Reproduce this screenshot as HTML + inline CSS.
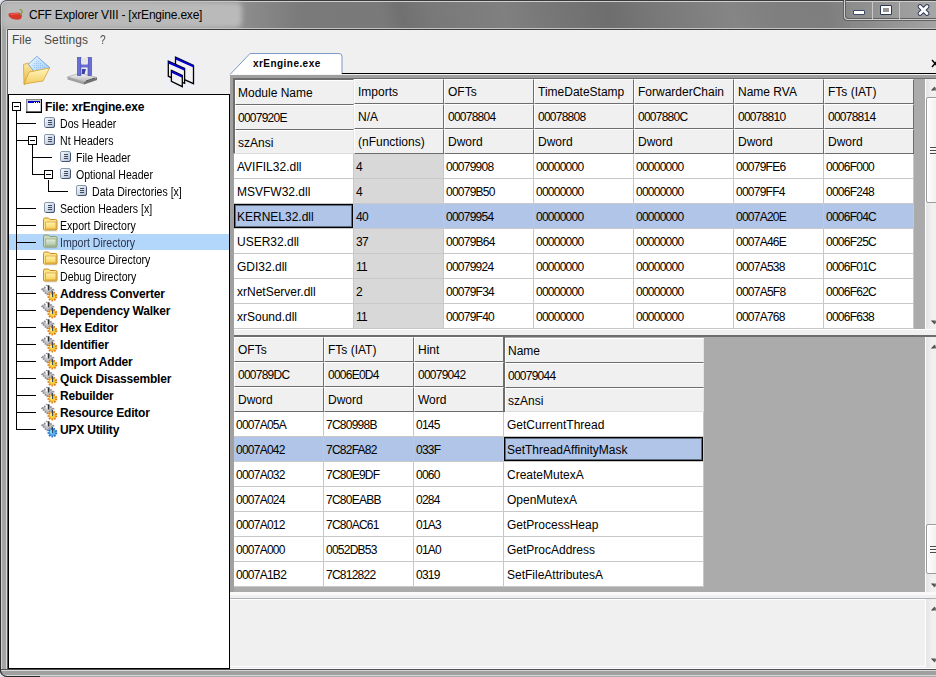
<!DOCTYPE html><html><head><meta charset="utf-8"><style>
html,body{margin:0;padding:0;}body{width:936px;height:677px;overflow:hidden;position:relative;background:#f0f0f0;font-family:"Liberation Sans", sans-serif;}
div{box-sizing:border-box;}
.g{font-size:12px;line-height:14px;color:#000;}
.t{font-size:11px;line-height:13px;color:#000;}
</style></head><body>
<div style="position:absolute;left:0px;top:0px;width:936px;height:677px;background:#dfe6ee;"></div>
<div style="position:absolute;left:0;top:0;width:940px;height:677px;background:#a8a8a8;border-top-left-radius:7px;border-bottom-left-radius:7px;border-left:1px solid #303030;border-top:1px solid #3a3a3a;box-sizing:border-box;"></div>
<div style="position:absolute;left:1px;top:1px;width:936px;height:28px;border-top-left-radius:6px;background:linear-gradient(90deg,#a8a8a8 0px,#a8a8a8 60px,#9a9a9a 200px,#7a7a7a 300px,#777 600px,#7e7e7e 780px,#8a8a8a 860px,#a4a4a4 936px);border-top:1px solid #cfcfcf;border-left:1px solid #cfcfcf;box-sizing:border-box;"></div>
<div style="position:absolute;left:2px;top:2px;width:240px;height:26px;background:#bababa;border-radius:6px;filter:blur(2.5px);"></div>
<div style="position:absolute;left:250px;top:2px;width:600px;height:26px;background:linear-gradient(75deg, rgba(0,0,0,0) 0px, rgba(0,0,0,0) 130px, rgba(0,0,0,0.07) 150px, rgba(0,0,0,0) 180px, rgba(255,255,255,0.06) 250px, rgba(0,0,0,0) 290px, rgba(0,0,0,0.08) 350px, rgba(0,0,0,0) 400px, rgba(255,255,255,0.07) 470px, rgba(0,0,0,0) 520px, rgba(0,0,0,0.05) 560px, rgba(0,0,0,0) 600px);"></div>
<div style="position:absolute;left:1px;top:29px;width:6px;height:641px;background:linear-gradient(90deg,#d0d0d0 0px,#d0d0d0 1px,#a4a4a4 1px,#a4a4a4 5px,#d8d8d8 5px);"></div>
<div style="position:absolute;left:6px;top:28px;width:940px;height:643px;border-top:1px solid #c4c4c4;border-left:1px solid #d8d8d8;border-top-left-radius:2px;box-sizing:border-box;"></div>
<div style="position:absolute;left:7px;top:29px;width:940px;height:641px;border-top:1px solid #3c3c3c;border-left:1px solid #5a5a5a;border-top-left-radius:1px;box-sizing:border-box;"></div>
<div style="position:absolute;left:1px;top:669px;width:935px;height:1px;background:#505050;"></div>
<div style="position:absolute;left:1px;top:670px;width:935px;height:1px;background:#d8d8d8;"></div>
<div style="position:absolute;left:1px;top:671px;width:935px;height:4px;background:#a0a0a0;"></div>
<div style="position:absolute;left:1px;top:675px;width:935px;height:1px;background:#d8d8d8;"></div>
<div style="position:absolute;left:0;top:660px;width:40px;height:17px;border-bottom:1px solid #2a2a2a;border-left:1px solid #303030;border-bottom-left-radius:7px;box-sizing:border-box;"></div>
<div style="position:absolute;left:8px;top:30px;width:928px;height:639px;background:#f0f0f0;"></div>
<svg style="position:absolute;left:0;top:0" width="30" height="28" viewBox="0 0 30 28"><path d="M8.6 14 C9 12.5, 13 13, 17 12.5 C19 12.3, 21 13, 21.8 15 C22.2 17.5, 21 19.5, 18.5 19.6 C15 19.8, 11 19, 9 16.5 C8.5 15.5, 8.5 14.5, 8.6 14Z" fill="#d8382c"/><path d="M10.5 14.3 C13 14, 16 13.8, 19 13.6" stroke="#f08a7a" stroke-width="1" fill="none" opacity="0.7"/><path d="M20 14.8 C21.8 13.8, 23 11.5, 21.5 10.2 C21 9.8, 20.2 9.6, 19.6 9.8" stroke="#8a9a38" stroke-width="1.4" fill="none"/></svg>
<div style="position:absolute;left:29px;top:9px;white-space:pre;font-size:12px;line-height:13px;color:#000;letter-spacing:-0.2px;">CFF Explorer VIII - [xrEngine.exe]</div>
<div style="position:absolute;left:844px;top:0px;width:100px;height:20px;border:1px solid #d0d0d0;border-top:none;border-bottom-left-radius:4px;background:rgba(255,255,255,0.04);box-shadow:inset 1px -1px 0 #606060, -1px 1px 0 #606060;"></div>
<div style="position:absolute;left:872px;top:1px;width:1px;height:18px;background:#c8c8c8;"></div>
<div style="position:absolute;left:899px;top:1px;width:1px;height:18px;background:#c8c8c8;"></div>
<div style="position:absolute;left:853px;top:10px;width:12px;height:5px;background:#fff;border:1px solid #3a4a6a;border-radius:1px;"></div>
<div style="position:absolute;left:880px;top:5px;width:12px;height:10px;background:transparent;border:1px solid #2e3a55;box-shadow:inset 0 0 0 2px #fff;border-radius:1px;"></div>
<svg style="position:absolute;left:917px;top:4px" width="13" height="12" viewBox="0 0 13 12"><path d="M3 2.5 L10 9.5 M10 2.5 L3 9.5" stroke="#2e3a55" stroke-width="4.6" stroke-linecap="round"/><path d="M3 2.5 L10 9.5 M10 2.5 L3 9.5" stroke="#fff" stroke-width="2.8" stroke-linecap="round"/></svg>
<div style="position:absolute;left:12px;top:34px;white-space:pre;font-size:12px;line-height:13px;color:#4a4a4a;">File</div>
<div style="position:absolute;left:44px;top:34px;white-space:pre;font-size:12px;line-height:13px;color:#4a4a4a;letter-spacing:0.1px;">Settings</div>
<div style="position:absolute;left:100px;top:34px;white-space:pre;font-size:12px;line-height:13px;color:#4a4a4a;transform:scaleX(0.85);transform-origin:0 0;">?</div>
<svg style="position:absolute;left:22px;top:55px" width="30" height="31" viewBox="0 0 30 31">
<defs><linearGradient id="fy" x1="0" y1="0" x2="0" y2="1"><stop offset="0" stop-color="#fff6c0"/><stop offset="1" stop-color="#f3cc60"/></linearGradient>
<linearGradient id="fy2" x1="0" y1="0" x2="0" y2="1"><stop offset="0" stop-color="#fbe7a0"/><stop offset="1" stop-color="#e9b84a"/></linearGradient>
<linearGradient id="fb" x1="0" y1="0" x2="1" y2="1"><stop offset="0" stop-color="#f0f8ff"/><stop offset="1" stop-color="#8cc0f2"/></linearGradient>
<pattern id="dots" width="2" height="2" patternUnits="userSpaceOnUse"><rect width="1" height="1" fill="#6aa6e8" opacity="0.5"/></pattern></defs>
<path d="M1.5 9.5 L6 8 L8 9.5 L12 9.5 L10 26 L2 29.5 Z" fill="url(#fy2)" stroke="#d6a232" stroke-width="0.8"/>
<path d="M14.8 1.3 L27.7 12.5 L17 22.7 L6.3 9.3 Z" fill="url(#fb)" stroke="#5a90d0" stroke-width="0.7"/>
<path d="M14.8 4 L24 12.5 L17 19 L10 10 Z" fill="url(#dots)"/>
<path d="M2 29 L7 17 L27.5 13 L21 26 Z" fill="url(#fy)" stroke="#d6a232" stroke-width="0.8"/>
</svg>
<svg style="position:absolute;left:67px;top:56px" width="31" height="29" viewBox="0 0 31 29">
<defs><linearGradient id="dg" x1="0" y1="0" x2="0" y2="1"><stop offset="0" stop-color="#fafafa"/><stop offset="1" stop-color="#b4b4b4"/></linearGradient></defs>
<path d="M0.5 21 L13 17 L30 21.5 L17 26 Z" fill="url(#dg)" stroke="#9a9a9a" stroke-width="0.6"/>
<path d="M0.5 21 L17 26 L17 28.5 L0.5 23.5Z" fill="#a0a0a0"/>
<path d="M17 26 L30 21.5 L30 24 L17 28.5Z" fill="#707070"/>
<path d="M19 25 L28 22" stroke="#5a5a5a" stroke-width="1"/>
<rect x="28" y="22" width="1" height="1" fill="#3c3"/>
<rect x="10.5" y="1.5" width="3.5" height="18" fill="#6a6ed4" stroke="#3b40a0" stroke-width="0.6"/>
<rect x="21" y="1.5" width="3.5" height="18" fill="#6a6ed4" stroke="#3b40a0" stroke-width="0.6"/>
<rect x="14" y="8.5" width="7" height="3" fill="#6a6ed4"/>
<rect x="14" y="2" width="7" height="5.5" fill="#e4e4e4"/>
<path d="M15 13 L19 13 L17.5 18 L15 18Z" fill="#3b40a0"/>
</svg>
<svg style="position:absolute;left:165px;top:56px" width="32" height="32" viewBox="0 0 32 32">
<rect x="0" y="0" width="32" height="32" fill="#eef0f5"/>
<path d="M10.5 1.2 L28.5 9.3 L28.5 27.7 L10.5 19.6 Z" fill="#f2f2f2" stroke="#000" stroke-width="1.3"/>
<path d="M10.5 1.2 L28.5 9.3 L28.5 11.6 L10.5 3.5Z" fill="#0000d0"/>
<path d="M3.3 5.2 L19.6 12.4 L19.6 27.3 L3.3 20.2 Z" fill="#f2f2f2" stroke="#000" stroke-width="1.3"/>
<path d="M3.3 5.2 L19.6 12.4 L19.6 14.7 L3.3 7.5Z" fill="#0000d0"/>
<path d="M6.4 14.4 L17.3 19.5 L17.3 30.7 L6.4 25.3 Z" fill="#f2f2f2" stroke="#000" stroke-width="1.3"/>
<path d="M6.4 14.4 L17.3 19.5 L17.3 21.8 L6.4 16.7Z" fill="#0000d0"/>
</svg>
<div style="position:absolute;left:8px;top:94px;width:222px;height:575px;background:#fff;border:1px solid #000;"></div>
<div style="position:absolute;left:9px;top:234px;width:220px;height:16px;background:#b3d6fb;"></div>
<div style="position:absolute;left:16px;top:111px;width:1px;height:319px;background:#000;"></div>
<div style="position:absolute;left:12px;top:102px;width:9px;height:9px;background:#fff;border:1px solid #000;"></div>
<div style="position:absolute;left:14px;top:106px;width:5px;height:1px;background:#000;"></div>
<svg style="position:absolute;left:26px;top:99px" width="16" height="14" viewBox="0 0 16 14" shape-rendering="crispEdges"><rect x="0" y="0" width="16" height="14" fill="#8a8a8a"/><rect x="1" y="1" width="14" height="12" fill="#c8c8c8"/><rect x="2" y="2" width="12" height="10" fill="#fff"/><rect x="2" y="2" width="12" height="2" fill="#0000c8"/><rect x="7" y="2" width="7" height="2" fill="#000"/><rect x="8" y="3" width="1" height="1" fill="#fff"/><rect x="10" y="3" width="1" height="1" fill="#fff"/><rect x="12" y="3" width="1" height="1" fill="#fff"/><rect x="7" y="2" width="7" height="1" fill="#0000c8"/><rect x="0" y="13" width="16" height="1" fill="#000"/><rect x="15" y="0" width="1" height="14" fill="#000"/><rect x="0" y="12" width="16" height="1" fill="#000" opacity="0.5"/></svg>
<div style="position:absolute;left:45px;top:100px;white-space:pre;font-size:12px;line-height:14px;font-weight:bold;color:#000;letter-spacing:-0.2px;">File: xrEngine.exe</div>
<div style="position:absolute;left:16px;top:123px;width:20px;height:1px;background:#000;"></div>
<svg style="position:absolute;left:44px;top:117px" width="11" height="11" viewBox="0 0 11 11"><defs><linearGradient id="dc123" x1="0" y1="0" x2="1" y2="1"><stop offset="0" stop-color="#fdfeff"/><stop offset="1" stop-color="#aebcd0"/></linearGradient></defs><rect x="0.5" y="0.5" width="10" height="10" rx="1.5" fill="url(#dc123)" stroke="#8797b0"/><path d="M10.5 2 L10.5 9 Q10.5 10.5 9 10.5 L2 10.5" stroke="#445472" fill="none"/><path d="M4 3.5h4M4 5.5h4M4 7.5h4" stroke="#3c4a64" stroke-width="1"/></svg>
<div style="position:absolute;left:60px;top:117px;white-space:pre;font-size:12px;line-height:14px;color:#000;transform:scaleX(0.88);transform-origin:0 0;">Dos Header</div>
<div style="position:absolute;left:16px;top:140px;width:20px;height:1px;background:#000;"></div>
<svg style="position:absolute;left:44px;top:134px" width="11" height="11" viewBox="0 0 11 11"><defs><linearGradient id="dc140" x1="0" y1="0" x2="1" y2="1"><stop offset="0" stop-color="#fdfeff"/><stop offset="1" stop-color="#aebcd0"/></linearGradient></defs><rect x="0.5" y="0.5" width="10" height="10" rx="1.5" fill="url(#dc140)" stroke="#8797b0"/><path d="M10.5 2 L10.5 9 Q10.5 10.5 9 10.5 L2 10.5" stroke="#445472" fill="none"/><path d="M4 3.5h4M4 5.5h4M4 7.5h4" stroke="#3c4a64" stroke-width="1"/></svg>
<div style="position:absolute;left:60px;top:134px;white-space:pre;font-size:12px;line-height:14px;color:#000;transform:scaleX(0.88);transform-origin:0 0;">Nt Headers</div>
<div style="position:absolute;left:32px;top:157px;width:20px;height:1px;background:#000;"></div>
<svg style="position:absolute;left:60px;top:151px" width="11" height="11" viewBox="0 0 11 11"><defs><linearGradient id="dc157" x1="0" y1="0" x2="1" y2="1"><stop offset="0" stop-color="#fdfeff"/><stop offset="1" stop-color="#aebcd0"/></linearGradient></defs><rect x="0.5" y="0.5" width="10" height="10" rx="1.5" fill="url(#dc157)" stroke="#8797b0"/><path d="M10.5 2 L10.5 9 Q10.5 10.5 9 10.5 L2 10.5" stroke="#445472" fill="none"/><path d="M4 3.5h4M4 5.5h4M4 7.5h4" stroke="#3c4a64" stroke-width="1"/></svg>
<div style="position:absolute;left:76px;top:151px;white-space:pre;font-size:12px;line-height:14px;color:#000;transform:scaleX(0.88);transform-origin:0 0;">File Header</div>
<div style="position:absolute;left:32px;top:174px;width:20px;height:1px;background:#000;"></div>
<svg style="position:absolute;left:60px;top:168px" width="11" height="11" viewBox="0 0 11 11"><defs><linearGradient id="dc174" x1="0" y1="0" x2="1" y2="1"><stop offset="0" stop-color="#fdfeff"/><stop offset="1" stop-color="#aebcd0"/></linearGradient></defs><rect x="0.5" y="0.5" width="10" height="10" rx="1.5" fill="url(#dc174)" stroke="#8797b0"/><path d="M10.5 2 L10.5 9 Q10.5 10.5 9 10.5 L2 10.5" stroke="#445472" fill="none"/><path d="M4 3.5h4M4 5.5h4M4 7.5h4" stroke="#3c4a64" stroke-width="1"/></svg>
<div style="position:absolute;left:76px;top:168px;white-space:pre;font-size:12px;line-height:14px;color:#000;transform:scaleX(0.88);transform-origin:0 0;">Optional Header</div>
<div style="position:absolute;left:48px;top:191px;width:20px;height:1px;background:#000;"></div>
<svg style="position:absolute;left:76px;top:185px" width="11" height="11" viewBox="0 0 11 11"><defs><linearGradient id="dc191" x1="0" y1="0" x2="1" y2="1"><stop offset="0" stop-color="#fdfeff"/><stop offset="1" stop-color="#aebcd0"/></linearGradient></defs><rect x="0.5" y="0.5" width="10" height="10" rx="1.5" fill="url(#dc191)" stroke="#8797b0"/><path d="M10.5 2 L10.5 9 Q10.5 10.5 9 10.5 L2 10.5" stroke="#445472" fill="none"/><path d="M4 3.5h4M4 5.5h4M4 7.5h4" stroke="#3c4a64" stroke-width="1"/></svg>
<div style="position:absolute;left:92px;top:185px;white-space:pre;font-size:12px;line-height:14px;color:#000;transform:scaleX(0.88);transform-origin:0 0;">Data Directories [x]</div>
<div style="position:absolute;left:16px;top:208px;width:20px;height:1px;background:#000;"></div>
<svg style="position:absolute;left:44px;top:202px" width="11" height="11" viewBox="0 0 11 11"><defs><linearGradient id="dc208" x1="0" y1="0" x2="1" y2="1"><stop offset="0" stop-color="#fdfeff"/><stop offset="1" stop-color="#aebcd0"/></linearGradient></defs><rect x="0.5" y="0.5" width="10" height="10" rx="1.5" fill="url(#dc208)" stroke="#8797b0"/><path d="M10.5 2 L10.5 9 Q10.5 10.5 9 10.5 L2 10.5" stroke="#445472" fill="none"/><path d="M4 3.5h4M4 5.5h4M4 7.5h4" stroke="#3c4a64" stroke-width="1"/></svg>
<div style="position:absolute;left:60px;top:202px;white-space:pre;font-size:12px;line-height:14px;color:#000;transform:scaleX(0.88);transform-origin:0 0;">Section Headers [x]</div>
<div style="position:absolute;left:16px;top:225px;width:20px;height:1px;background:#000;"></div>
<svg style="position:absolute;left:41px;top:217px" width="18" height="15" viewBox="0 0 18 15"><defs><linearGradient id="ffolder225" x1="0" y1="0" x2="0" y2="1"><stop offset="0" stop-color="#fff4b0"/><stop offset="1" stop-color="#f7cf55"/></linearGradient></defs><path d="M2.5 12 L2.5 2.5 Q2.5 1 4 1 L7.5 1 L9 2.5 L14.5 2.5 Q16 2.5 16 4 L16 12 Q16 13 15 13 L3.5 13 Q2.5 13 2.5 12Z" fill="#fde48c" stroke="#c98b1c" stroke-width="1"/><path d="M4.5 5 L15 5 L15 12 L4.5 12Z" fill="url(#ffolder225)" stroke="#c98b1c" stroke-width="0.6"/><path d="M3.5 14 L16.5 14" stroke="#000" stroke-opacity="0.12"/></svg>
<div style="position:absolute;left:60px;top:219px;white-space:pre;font-size:12px;line-height:14px;color:#000;transform:scaleX(0.88);transform-origin:0 0;">Export Directory</div>
<div style="position:absolute;left:16px;top:242px;width:20px;height:1px;background:#000;"></div>
<svg style="position:absolute;left:41px;top:234px" width="18" height="15" viewBox="0 0 18 15"><defs><linearGradient id="ffolderg242" x1="0" y1="0" x2="0" y2="1"><stop offset="0" stop-color="#e2eedc"/><stop offset="1" stop-color="#a9c2a4"/></linearGradient></defs><path d="M2.5 12 L2.5 2.5 Q2.5 1 4 1 L7.5 1 L9 2.5 L14.5 2.5 Q16 2.5 16 4 L16 12 Q16 13 15 13 L3.5 13 Q2.5 13 2.5 12Z" fill="#c8d8c0" stroke="#8f9a6a" stroke-width="1"/><path d="M4.5 5 L15 5 L15 12 L4.5 12Z" fill="url(#ffolderg242)" stroke="#8f9a6a" stroke-width="0.6"/><path d="M3.5 14 L16.5 14" stroke="#000" stroke-opacity="0.12"/></svg>
<div style="position:absolute;left:60px;top:236px;white-space:pre;font-size:12px;line-height:14px;color:#2a3550;transform:scaleX(0.88);transform-origin:0 0;">Import Directory</div>
<div style="position:absolute;left:16px;top:259px;width:20px;height:1px;background:#000;"></div>
<svg style="position:absolute;left:41px;top:251px" width="18" height="15" viewBox="0 0 18 15"><defs><linearGradient id="ffolder259" x1="0" y1="0" x2="0" y2="1"><stop offset="0" stop-color="#fff4b0"/><stop offset="1" stop-color="#f7cf55"/></linearGradient></defs><path d="M2.5 12 L2.5 2.5 Q2.5 1 4 1 L7.5 1 L9 2.5 L14.5 2.5 Q16 2.5 16 4 L16 12 Q16 13 15 13 L3.5 13 Q2.5 13 2.5 12Z" fill="#fde48c" stroke="#c98b1c" stroke-width="1"/><path d="M4.5 5 L15 5 L15 12 L4.5 12Z" fill="url(#ffolder259)" stroke="#c98b1c" stroke-width="0.6"/><path d="M3.5 14 L16.5 14" stroke="#000" stroke-opacity="0.12"/></svg>
<div style="position:absolute;left:60px;top:253px;white-space:pre;font-size:12px;line-height:14px;color:#000;transform:scaleX(0.88);transform-origin:0 0;">Resource Directory</div>
<div style="position:absolute;left:16px;top:276px;width:20px;height:1px;background:#000;"></div>
<svg style="position:absolute;left:41px;top:268px" width="18" height="15" viewBox="0 0 18 15"><defs><linearGradient id="ffolder276" x1="0" y1="0" x2="0" y2="1"><stop offset="0" stop-color="#fff4b0"/><stop offset="1" stop-color="#f7cf55"/></linearGradient></defs><path d="M2.5 12 L2.5 2.5 Q2.5 1 4 1 L7.5 1 L9 2.5 L14.5 2.5 Q16 2.5 16 4 L16 12 Q16 13 15 13 L3.5 13 Q2.5 13 2.5 12Z" fill="#fde48c" stroke="#c98b1c" stroke-width="1"/><path d="M4.5 5 L15 5 L15 12 L4.5 12Z" fill="url(#ffolder276)" stroke="#c98b1c" stroke-width="0.6"/><path d="M3.5 14 L16.5 14" stroke="#000" stroke-opacity="0.12"/></svg>
<div style="position:absolute;left:60px;top:270px;white-space:pre;font-size:12px;line-height:14px;color:#000;transform:scaleX(0.88);transform-origin:0 0;">Debug Directory</div>
<div style="position:absolute;left:16px;top:293px;width:20px;height:1px;background:#000;"></div>
<svg style="position:absolute;left:40px;top:283px" width="20" height="20" viewBox="0 0 20 20"><path d="M2 6.5 L7.5 2 L13.5 7 L7 11.5 Z" fill="#b4b4b4" stroke="#8c8c9c" stroke-width="1.6" stroke-dasharray="1.6 1.1"/><path d="M4 6.5 L7.5 3.5 L11.5 7 L7 10Z" fill="#c8c8c8"/><rect x="5.8" y="3" width="1.2" height="3.5" fill="#fff"/><rect x="8" y="2.5" width="1.3" height="5" fill="#303030"/><circle cx="12.4" cy="13.6" r="3.9" fill="#f2cf3c" stroke="#e0781a" stroke-width="2" stroke-dasharray="1.5 1.2"/><circle cx="11.5" cy="12.8" r="1.6" fill="#f8f0a0" opacity="0.8"/><path d="M12.6 8 L12.6 14" stroke="#2a3a5a" stroke-width="1"/></svg>
<div style="position:absolute;left:60px;top:287px;white-space:pre;font-size:12px;line-height:14px;font-weight:bold;color:#000;letter-spacing:-0.2px;">Address Converter</div>
<div style="position:absolute;left:16px;top:310px;width:20px;height:1px;background:#000;"></div>
<svg style="position:absolute;left:40px;top:300px" width="20" height="20" viewBox="0 0 20 20"><path d="M2 6.5 L7.5 2 L13.5 7 L7 11.5 Z" fill="#b4b4b4" stroke="#8c8c9c" stroke-width="1.6" stroke-dasharray="1.6 1.1"/><path d="M4 6.5 L7.5 3.5 L11.5 7 L7 10Z" fill="#c8c8c8"/><rect x="5.8" y="3" width="1.2" height="3.5" fill="#fff"/><rect x="8" y="2.5" width="1.3" height="5" fill="#303030"/><circle cx="12.4" cy="13.6" r="3.9" fill="#f2cf3c" stroke="#e0781a" stroke-width="2" stroke-dasharray="1.5 1.2"/><circle cx="11.5" cy="12.8" r="1.6" fill="#f8f0a0" opacity="0.8"/><path d="M12.6 8 L12.6 14" stroke="#2a3a5a" stroke-width="1"/></svg>
<div style="position:absolute;left:60px;top:304px;white-space:pre;font-size:12px;line-height:14px;font-weight:bold;color:#000;letter-spacing:-0.2px;">Dependency Walker</div>
<div style="position:absolute;left:16px;top:327px;width:20px;height:1px;background:#000;"></div>
<svg style="position:absolute;left:40px;top:317px" width="20" height="20" viewBox="0 0 20 20"><path d="M2 6.5 L7.5 2 L13.5 7 L7 11.5 Z" fill="#b4b4b4" stroke="#8c8c9c" stroke-width="1.6" stroke-dasharray="1.6 1.1"/><path d="M4 6.5 L7.5 3.5 L11.5 7 L7 10Z" fill="#c8c8c8"/><rect x="5.8" y="3" width="1.2" height="3.5" fill="#fff"/><rect x="8" y="2.5" width="1.3" height="5" fill="#303030"/><circle cx="12.4" cy="13.6" r="3.9" fill="#f2cf3c" stroke="#e0781a" stroke-width="2" stroke-dasharray="1.5 1.2"/><circle cx="11.5" cy="12.8" r="1.6" fill="#f8f0a0" opacity="0.8"/><path d="M12.6 8 L12.6 14" stroke="#2a3a5a" stroke-width="1"/></svg>
<div style="position:absolute;left:60px;top:321px;white-space:pre;font-size:12px;line-height:14px;font-weight:bold;color:#000;letter-spacing:-0.2px;">Hex Editor</div>
<div style="position:absolute;left:16px;top:344px;width:20px;height:1px;background:#000;"></div>
<svg style="position:absolute;left:40px;top:334px" width="20" height="20" viewBox="0 0 20 20"><path d="M2 6.5 L7.5 2 L13.5 7 L7 11.5 Z" fill="#b4b4b4" stroke="#8c8c9c" stroke-width="1.6" stroke-dasharray="1.6 1.1"/><path d="M4 6.5 L7.5 3.5 L11.5 7 L7 10Z" fill="#c8c8c8"/><rect x="5.8" y="3" width="1.2" height="3.5" fill="#fff"/><rect x="8" y="2.5" width="1.3" height="5" fill="#303030"/><circle cx="12.4" cy="13.6" r="3.9" fill="#f2cf3c" stroke="#e0781a" stroke-width="2" stroke-dasharray="1.5 1.2"/><circle cx="11.5" cy="12.8" r="1.6" fill="#f8f0a0" opacity="0.8"/><path d="M12.6 8 L12.6 14" stroke="#2a3a5a" stroke-width="1"/></svg>
<div style="position:absolute;left:60px;top:338px;white-space:pre;font-size:12px;line-height:14px;font-weight:bold;color:#000;letter-spacing:-0.2px;">Identifier</div>
<div style="position:absolute;left:16px;top:361px;width:20px;height:1px;background:#000;"></div>
<svg style="position:absolute;left:40px;top:351px" width="20" height="20" viewBox="0 0 20 20"><path d="M2 6.5 L7.5 2 L13.5 7 L7 11.5 Z" fill="#b4b4b4" stroke="#8c8c9c" stroke-width="1.6" stroke-dasharray="1.6 1.1"/><path d="M4 6.5 L7.5 3.5 L11.5 7 L7 10Z" fill="#c8c8c8"/><rect x="5.8" y="3" width="1.2" height="3.5" fill="#fff"/><rect x="8" y="2.5" width="1.3" height="5" fill="#303030"/><circle cx="12.4" cy="13.6" r="3.9" fill="#f2cf3c" stroke="#e0781a" stroke-width="2" stroke-dasharray="1.5 1.2"/><circle cx="11.5" cy="12.8" r="1.6" fill="#f8f0a0" opacity="0.8"/><path d="M12.6 8 L12.6 14" stroke="#2a3a5a" stroke-width="1"/></svg>
<div style="position:absolute;left:60px;top:355px;white-space:pre;font-size:12px;line-height:14px;font-weight:bold;color:#000;letter-spacing:-0.2px;">Import Adder</div>
<div style="position:absolute;left:16px;top:378px;width:20px;height:1px;background:#000;"></div>
<svg style="position:absolute;left:40px;top:368px" width="20" height="20" viewBox="0 0 20 20"><path d="M2 6.5 L7.5 2 L13.5 7 L7 11.5 Z" fill="#b4b4b4" stroke="#8c8c9c" stroke-width="1.6" stroke-dasharray="1.6 1.1"/><path d="M4 6.5 L7.5 3.5 L11.5 7 L7 10Z" fill="#c8c8c8"/><rect x="5.8" y="3" width="1.2" height="3.5" fill="#fff"/><rect x="8" y="2.5" width="1.3" height="5" fill="#303030"/><circle cx="12.4" cy="13.6" r="3.9" fill="#f2cf3c" stroke="#e0781a" stroke-width="2" stroke-dasharray="1.5 1.2"/><circle cx="11.5" cy="12.8" r="1.6" fill="#f8f0a0" opacity="0.8"/><path d="M12.6 8 L12.6 14" stroke="#2a3a5a" stroke-width="1"/></svg>
<div style="position:absolute;left:60px;top:372px;white-space:pre;font-size:12px;line-height:14px;font-weight:bold;color:#000;letter-spacing:-0.2px;">Quick Disassembler</div>
<div style="position:absolute;left:16px;top:395px;width:20px;height:1px;background:#000;"></div>
<svg style="position:absolute;left:40px;top:385px" width="20" height="20" viewBox="0 0 20 20"><path d="M2 6.5 L7.5 2 L13.5 7 L7 11.5 Z" fill="#b4b4b4" stroke="#8c8c9c" stroke-width="1.6" stroke-dasharray="1.6 1.1"/><path d="M4 6.5 L7.5 3.5 L11.5 7 L7 10Z" fill="#c8c8c8"/><rect x="5.8" y="3" width="1.2" height="3.5" fill="#fff"/><rect x="8" y="2.5" width="1.3" height="5" fill="#303030"/><circle cx="12.4" cy="13.6" r="3.9" fill="#f2cf3c" stroke="#e0781a" stroke-width="2" stroke-dasharray="1.5 1.2"/><circle cx="11.5" cy="12.8" r="1.6" fill="#f8f0a0" opacity="0.8"/><path d="M12.6 8 L12.6 14" stroke="#2a3a5a" stroke-width="1"/></svg>
<div style="position:absolute;left:60px;top:389px;white-space:pre;font-size:12px;line-height:14px;font-weight:bold;color:#000;letter-spacing:-0.2px;">Rebuilder</div>
<div style="position:absolute;left:16px;top:412px;width:20px;height:1px;background:#000;"></div>
<svg style="position:absolute;left:40px;top:402px" width="20" height="20" viewBox="0 0 20 20"><path d="M2 6.5 L7.5 2 L13.5 7 L7 11.5 Z" fill="#b4b4b4" stroke="#8c8c9c" stroke-width="1.6" stroke-dasharray="1.6 1.1"/><path d="M4 6.5 L7.5 3.5 L11.5 7 L7 10Z" fill="#c8c8c8"/><rect x="5.8" y="3" width="1.2" height="3.5" fill="#fff"/><rect x="8" y="2.5" width="1.3" height="5" fill="#303030"/><circle cx="12.4" cy="13.6" r="3.9" fill="#f2cf3c" stroke="#e0781a" stroke-width="2" stroke-dasharray="1.5 1.2"/><circle cx="11.5" cy="12.8" r="1.6" fill="#f8f0a0" opacity="0.8"/><path d="M12.6 8 L12.6 14" stroke="#2a3a5a" stroke-width="1"/></svg>
<div style="position:absolute;left:60px;top:406px;white-space:pre;font-size:12px;line-height:14px;font-weight:bold;color:#000;letter-spacing:-0.2px;">Resource Editor</div>
<div style="position:absolute;left:16px;top:429px;width:20px;height:1px;background:#000;"></div>
<svg style="position:absolute;left:40px;top:419px" width="20" height="20" viewBox="0 0 20 20"><path d="M2 6.5 L7.5 2 L13.5 7 L7 11.5 Z" fill="#b4b4b4" stroke="#8c8c9c" stroke-width="1.6" stroke-dasharray="1.6 1.1"/><path d="M4 6.5 L7.5 3.5 L11.5 7 L7 10Z" fill="#c8c8c8"/><rect x="5.8" y="3" width="1.2" height="3.5" fill="#fff"/><rect x="8" y="2.5" width="1.3" height="5" fill="#303030"/><circle cx="12.4" cy="13.6" r="3.9" fill="#5ab0f0" stroke="#2a70c0" stroke-width="2" stroke-dasharray="1.5 1.2"/><circle cx="11.5" cy="12.8" r="1.6" fill="#80f0f0" opacity="0.8"/><path d="M12.6 8 L12.6 14" stroke="#2a3a5a" stroke-width="1"/></svg>
<div style="position:absolute;left:60px;top:423px;white-space:pre;font-size:12px;line-height:14px;font-weight:bold;color:#000;letter-spacing:-0.2px;">UPX Utility</div>
<div style="position:absolute;left:32px;top:145px;width:1px;height:30px;background:#000;"></div>
<div style="position:absolute;left:28px;top:136px;width:9px;height:9px;background:#fff;border:1px solid #000;"></div>
<div style="position:absolute;left:30px;top:140px;width:5px;height:1px;background:#000;"></div>
<div style="position:absolute;left:48px;top:180px;width:1px;height:12px;background:#000;"></div>
<div style="position:absolute;left:44px;top:170px;width:9px;height:9px;background:#fff;border:1px solid #000;"></div>
<div style="position:absolute;left:46px;top:174px;width:5px;height:1px;background:#000;"></div>
<svg style="position:absolute;left:229px;top:52px" width="707" height="24" viewBox="0 0 707 24">
<path d="M1 22.5 L21 1.5 L110 1.5 Q113 1.5 113 4.5 L113 22" fill="#fff" stroke="#7a9cc4" stroke-width="1"/>
<rect x="113" y="21" width="594" height="1" fill="#000"/>
</svg>
<div style="position:absolute;left:253px;top:58px;white-space:pre;font-size:10px;line-height:12px;font-weight:bold;color:#000;letter-spacing:0.45px;">xrEngine.exe</div>
<svg style="position:absolute;left:931px;top:59px" width="8" height="9" viewBox="0 0 8 9"><path d="M1 1 L7 8 M7 1 L1 8" stroke="#000" stroke-width="1.4"/></svg>
<div style="position:absolute;left:230px;top:75px;width:695px;height:255px;background:#ababab;"></div>
<div style="position:absolute;left:230px;top:75px;width:706px;height:3px;background:#a0a0a0;"></div>
<div style="position:absolute;left:230px;top:75px;width:4px;height:255px;background:#a0a0a0;"></div>
<div style="position:absolute;left:233px;top:78px;width:703px;height:1px;background:#6d6d6d;"></div>
<div style="position:absolute;left:233px;top:78px;width:120px;height:2px;background:#6d6d6d;"></div>
<div style="position:absolute;left:233px;top:78px;width:2px;height:75px;background:#6d6d6d;"></div>
<div style="position:absolute;left:235px;top:80px;width:119px;height:25px;background:#f0f0f0;border-left:1px solid #fff;border-top:1px solid #fff;border-right:1px solid #e4e4e4;border-bottom:1px solid #6d6d6d;"></div>
<div style="position:absolute;left:238px;top:86px;white-space:pre;font-size:12px;line-height:14px;color:#000;letter-spacing:0px;">Module Name</div>
<div style="position:absolute;left:354px;top:79px;width:90px;height:25px;background:#f0f0f0;border-left:1px solid #fff;border-top:1px solid #fff;border-right:1px solid #6d6d6d;border-bottom:1px solid #6d6d6d;"></div>
<div style="position:absolute;left:358px;top:85px;white-space:pre;font-size:12px;line-height:14px;color:#000;letter-spacing:0px;">Imports</div>
<div style="position:absolute;left:444px;top:79px;width:90px;height:25px;background:#f0f0f0;border-left:1px solid #fff;border-top:1px solid #fff;border-right:1px solid #6d6d6d;border-bottom:1px solid #6d6d6d;"></div>
<div style="position:absolute;left:448px;top:85px;white-space:pre;font-size:12px;line-height:14px;color:#000;letter-spacing:0px;">OFTs</div>
<div style="position:absolute;left:534px;top:79px;width:100px;height:25px;background:#f0f0f0;border-left:1px solid #fff;border-top:1px solid #fff;border-right:1px solid #6d6d6d;border-bottom:1px solid #6d6d6d;"></div>
<div style="position:absolute;left:538px;top:85px;white-space:pre;font-size:12px;line-height:14px;color:#000;letter-spacing:0px;">TimeDateStamp</div>
<div style="position:absolute;left:634px;top:79px;width:100px;height:25px;background:#f0f0f0;border-left:1px solid #fff;border-top:1px solid #fff;border-right:1px solid #6d6d6d;border-bottom:1px solid #6d6d6d;"></div>
<div style="position:absolute;left:638px;top:85px;white-space:pre;font-size:12px;line-height:14px;color:#000;letter-spacing:0px;">ForwarderChain</div>
<div style="position:absolute;left:734px;top:79px;width:90px;height:25px;background:#f0f0f0;border-left:1px solid #fff;border-top:1px solid #fff;border-right:1px solid #6d6d6d;border-bottom:1px solid #6d6d6d;"></div>
<div style="position:absolute;left:738px;top:85px;white-space:pre;font-size:12px;line-height:14px;color:#000;letter-spacing:0px;">Name RVA</div>
<div style="position:absolute;left:824px;top:79px;width:90px;height:25px;background:#f0f0f0;border-left:1px solid #fff;border-top:1px solid #fff;border-right:1px solid #6d6d6d;border-bottom:1px solid #6d6d6d;"></div>
<div style="position:absolute;left:828px;top:85px;white-space:pre;font-size:12px;line-height:14px;color:#000;letter-spacing:0px;">FTs (IAT)</div>
<div style="position:absolute;left:235px;top:105px;width:119px;height:25px;background:#f0f0f0;border-left:1px solid #fff;border-top:1px solid #fff;border-right:1px solid #e4e4e4;border-bottom:1px solid #6d6d6d;"></div>
<div style="position:absolute;left:238px;top:111px;white-space:pre;font-size:12px;line-height:14px;color:#000;letter-spacing:-0.75px;">0007920E</div>
<div style="position:absolute;left:354px;top:104px;width:90px;height:25px;background:#f0f0f0;border-left:1px solid #fff;border-top:1px solid #fff;border-right:1px solid #6d6d6d;border-bottom:1px solid #6d6d6d;"></div>
<div style="position:absolute;left:358px;top:110px;white-space:pre;font-size:12px;line-height:14px;color:#000;letter-spacing:0px;">N/A</div>
<div style="position:absolute;left:444px;top:104px;width:90px;height:25px;background:#f0f0f0;border-left:1px solid #fff;border-top:1px solid #fff;border-right:1px solid #6d6d6d;border-bottom:1px solid #6d6d6d;"></div>
<div style="position:absolute;left:448px;top:110px;white-space:pre;font-size:12px;line-height:14px;color:#000;letter-spacing:-0.75px;">00078804</div>
<div style="position:absolute;left:534px;top:104px;width:100px;height:25px;background:#f0f0f0;border-left:1px solid #fff;border-top:1px solid #fff;border-right:1px solid #6d6d6d;border-bottom:1px solid #6d6d6d;"></div>
<div style="position:absolute;left:538px;top:110px;white-space:pre;font-size:12px;line-height:14px;color:#000;letter-spacing:-0.75px;">00078808</div>
<div style="position:absolute;left:634px;top:104px;width:100px;height:25px;background:#f0f0f0;border-left:1px solid #fff;border-top:1px solid #fff;border-right:1px solid #6d6d6d;border-bottom:1px solid #6d6d6d;"></div>
<div style="position:absolute;left:638px;top:110px;white-space:pre;font-size:12px;line-height:14px;color:#000;letter-spacing:-0.75px;">0007880C</div>
<div style="position:absolute;left:734px;top:104px;width:90px;height:25px;background:#f0f0f0;border-left:1px solid #fff;border-top:1px solid #fff;border-right:1px solid #6d6d6d;border-bottom:1px solid #6d6d6d;"></div>
<div style="position:absolute;left:738px;top:110px;white-space:pre;font-size:12px;line-height:14px;color:#000;letter-spacing:-0.75px;">00078810</div>
<div style="position:absolute;left:824px;top:104px;width:90px;height:25px;background:#f0f0f0;border-left:1px solid #fff;border-top:1px solid #fff;border-right:1px solid #6d6d6d;border-bottom:1px solid #6d6d6d;"></div>
<div style="position:absolute;left:828px;top:110px;white-space:pre;font-size:12px;line-height:14px;color:#000;letter-spacing:-0.75px;">00078814</div>
<div style="position:absolute;left:235px;top:130px;width:119px;height:24px;background:#f0f0f0;border-left:1px solid #fff;border-top:1px solid #fff;border-right:1px solid #e4e4e4;border-bottom:1px solid #dcdcdc;"></div>
<div style="position:absolute;left:238px;top:136px;white-space:pre;font-size:12px;line-height:14px;color:#000;letter-spacing:0px;">szAnsi</div>
<div style="position:absolute;left:354px;top:129px;width:90px;height:25px;background:#f0f0f0;border-left:1px solid #fff;border-top:1px solid #fff;border-right:1px solid #6d6d6d;border-bottom:1px solid #6d6d6d;"></div>
<div style="position:absolute;left:358px;top:135px;white-space:pre;font-size:12px;line-height:14px;color:#000;letter-spacing:0px;">(nFunctions)</div>
<div style="position:absolute;left:444px;top:129px;width:90px;height:25px;background:#f0f0f0;border-left:1px solid #fff;border-top:1px solid #fff;border-right:1px solid #6d6d6d;border-bottom:1px solid #6d6d6d;"></div>
<div style="position:absolute;left:448px;top:135px;white-space:pre;font-size:12px;line-height:14px;color:#000;letter-spacing:0px;">Dword</div>
<div style="position:absolute;left:534px;top:129px;width:100px;height:25px;background:#f0f0f0;border-left:1px solid #fff;border-top:1px solid #fff;border-right:1px solid #6d6d6d;border-bottom:1px solid #6d6d6d;"></div>
<div style="position:absolute;left:538px;top:135px;white-space:pre;font-size:12px;line-height:14px;color:#000;letter-spacing:0px;">Dword</div>
<div style="position:absolute;left:634px;top:129px;width:100px;height:25px;background:#f0f0f0;border-left:1px solid #fff;border-top:1px solid #fff;border-right:1px solid #6d6d6d;border-bottom:1px solid #6d6d6d;"></div>
<div style="position:absolute;left:638px;top:135px;white-space:pre;font-size:12px;line-height:14px;color:#000;letter-spacing:0px;">Dword</div>
<div style="position:absolute;left:734px;top:129px;width:90px;height:25px;background:#f0f0f0;border-left:1px solid #fff;border-top:1px solid #fff;border-right:1px solid #6d6d6d;border-bottom:1px solid #6d6d6d;"></div>
<div style="position:absolute;left:738px;top:135px;white-space:pre;font-size:12px;line-height:14px;color:#000;letter-spacing:0px;">Dword</div>
<div style="position:absolute;left:824px;top:129px;width:90px;height:25px;background:#f0f0f0;border-left:1px solid #fff;border-top:1px solid #fff;border-right:1px solid #6d6d6d;border-bottom:1px solid #6d6d6d;"></div>
<div style="position:absolute;left:828px;top:135px;white-space:pre;font-size:12px;line-height:14px;color:#000;letter-spacing:0px;">Dword</div>
<div style="position:absolute;left:234px;top:154px;width:120px;height:25px;background:#fff;border-right:1px solid #c8c8c8;border-bottom:1px solid #c8c8c8;"></div>
<div style="position:absolute;left:237px;top:160px;white-space:pre;font-size:12px;line-height:14px;color:#000;letter-spacing:0px;">AVIFIL32.dll</div>
<div style="position:absolute;left:354px;top:154px;width:90px;height:25px;background:#d8d8d8;border-right:1px solid #c8c8c8;border-bottom:1px solid #c8c8c8;"></div>
<div style="position:absolute;left:356px;top:160px;white-space:pre;font-size:12px;line-height:14px;color:#000;letter-spacing:-0.75px;">4</div>
<div style="position:absolute;left:444px;top:154px;width:90px;height:25px;background:#fff;border-right:1px solid #c8c8c8;border-bottom:1px solid #c8c8c8;"></div>
<div style="position:absolute;left:446px;top:160px;white-space:pre;font-size:12px;line-height:14px;color:#000;letter-spacing:-0.75px;">00079908</div>
<div style="position:absolute;left:534px;top:154px;width:100px;height:25px;background:#fff;border-right:1px solid #c8c8c8;border-bottom:1px solid #c8c8c8;"></div>
<div style="position:absolute;left:536px;top:160px;white-space:pre;font-size:12px;line-height:14px;color:#000;letter-spacing:-0.75px;">00000000</div>
<div style="position:absolute;left:634px;top:154px;width:100px;height:25px;background:#fff;border-right:1px solid #c8c8c8;border-bottom:1px solid #c8c8c8;"></div>
<div style="position:absolute;left:636px;top:160px;white-space:pre;font-size:12px;line-height:14px;color:#000;letter-spacing:-0.75px;">00000000</div>
<div style="position:absolute;left:734px;top:154px;width:90px;height:25px;background:#fff;border-right:1px solid #c8c8c8;border-bottom:1px solid #c8c8c8;"></div>
<div style="position:absolute;left:736px;top:160px;white-space:pre;font-size:12px;line-height:14px;color:#000;letter-spacing:-0.75px;">00079FE6</div>
<div style="position:absolute;left:824px;top:154px;width:90px;height:25px;background:#fff;border-right:1px solid #c8c8c8;border-bottom:1px solid #c8c8c8;"></div>
<div style="position:absolute;left:826px;top:160px;white-space:pre;font-size:12px;line-height:14px;color:#000;letter-spacing:-0.75px;">0006F000</div>
<div style="position:absolute;left:234px;top:179px;width:120px;height:25px;background:#fff;border-right:1px solid #c8c8c8;border-bottom:1px solid #c8c8c8;"></div>
<div style="position:absolute;left:237px;top:185px;white-space:pre;font-size:12px;line-height:14px;color:#000;letter-spacing:0px;">MSVFW32.dll</div>
<div style="position:absolute;left:354px;top:179px;width:90px;height:25px;background:#d8d8d8;border-right:1px solid #c8c8c8;border-bottom:1px solid #c8c8c8;"></div>
<div style="position:absolute;left:356px;top:185px;white-space:pre;font-size:12px;line-height:14px;color:#000;letter-spacing:-0.75px;">4</div>
<div style="position:absolute;left:444px;top:179px;width:90px;height:25px;background:#fff;border-right:1px solid #c8c8c8;border-bottom:1px solid #c8c8c8;"></div>
<div style="position:absolute;left:446px;top:185px;white-space:pre;font-size:12px;line-height:14px;color:#000;letter-spacing:-0.75px;">00079B50</div>
<div style="position:absolute;left:534px;top:179px;width:100px;height:25px;background:#fff;border-right:1px solid #c8c8c8;border-bottom:1px solid #c8c8c8;"></div>
<div style="position:absolute;left:536px;top:185px;white-space:pre;font-size:12px;line-height:14px;color:#000;letter-spacing:-0.75px;">00000000</div>
<div style="position:absolute;left:634px;top:179px;width:100px;height:25px;background:#fff;border-right:1px solid #c8c8c8;border-bottom:1px solid #c8c8c8;"></div>
<div style="position:absolute;left:636px;top:185px;white-space:pre;font-size:12px;line-height:14px;color:#000;letter-spacing:-0.75px;">00000000</div>
<div style="position:absolute;left:734px;top:179px;width:90px;height:25px;background:#fff;border-right:1px solid #c8c8c8;border-bottom:1px solid #c8c8c8;"></div>
<div style="position:absolute;left:736px;top:185px;white-space:pre;font-size:12px;line-height:14px;color:#000;letter-spacing:-0.75px;">00079FF4</div>
<div style="position:absolute;left:824px;top:179px;width:90px;height:25px;background:#fff;border-right:1px solid #c8c8c8;border-bottom:1px solid #c8c8c8;"></div>
<div style="position:absolute;left:826px;top:185px;white-space:pre;font-size:12px;line-height:14px;color:#000;letter-spacing:-0.75px;">0006F248</div>
<div style="position:absolute;left:234px;top:204px;width:120px;height:25px;background:#b0c5e7;border-right:1px solid #c8c8c8;border-bottom:1px solid #c8c8c8;"></div>
<div style="position:absolute;left:237px;top:210px;white-space:pre;font-size:12px;line-height:14px;color:#000;letter-spacing:0px;">KERNEL32.dll</div>
<div style="position:absolute;left:354px;top:204px;width:90px;height:25px;background:#b0c5e7;border-right:1px solid #c8c8c8;border-bottom:1px solid #c8c8c8;"></div>
<div style="position:absolute;left:356px;top:210px;white-space:pre;font-size:12px;line-height:14px;color:#000;letter-spacing:-0.75px;">40</div>
<div style="position:absolute;left:444px;top:204px;width:90px;height:25px;background:#b0c5e7;border-right:1px solid #c8c8c8;border-bottom:1px solid #c8c8c8;"></div>
<div style="position:absolute;left:446px;top:210px;white-space:pre;font-size:12px;line-height:14px;color:#000;letter-spacing:-0.75px;">00079954</div>
<div style="position:absolute;left:534px;top:204px;width:100px;height:25px;background:#b0c5e7;border-right:1px solid #c8c8c8;border-bottom:1px solid #c8c8c8;"></div>
<div style="position:absolute;left:536px;top:210px;white-space:pre;font-size:12px;line-height:14px;color:#000;letter-spacing:-0.75px;">00000000</div>
<div style="position:absolute;left:634px;top:204px;width:100px;height:25px;background:#b0c5e7;border-right:1px solid #c8c8c8;border-bottom:1px solid #c8c8c8;"></div>
<div style="position:absolute;left:636px;top:210px;white-space:pre;font-size:12px;line-height:14px;color:#000;letter-spacing:-0.75px;">00000000</div>
<div style="position:absolute;left:734px;top:204px;width:90px;height:25px;background:#b0c5e7;border-right:1px solid #c8c8c8;border-bottom:1px solid #c8c8c8;"></div>
<div style="position:absolute;left:736px;top:210px;white-space:pre;font-size:12px;line-height:14px;color:#000;letter-spacing:-0.75px;">0007A20E</div>
<div style="position:absolute;left:824px;top:204px;width:90px;height:25px;background:#b0c5e7;border-right:1px solid #c8c8c8;border-bottom:1px solid #c8c8c8;"></div>
<div style="position:absolute;left:826px;top:210px;white-space:pre;font-size:12px;line-height:14px;color:#000;letter-spacing:-0.75px;">0006F04C</div>
<div style="position:absolute;left:234px;top:229px;width:120px;height:25px;background:#fff;border-right:1px solid #c8c8c8;border-bottom:1px solid #c8c8c8;"></div>
<div style="position:absolute;left:237px;top:235px;white-space:pre;font-size:12px;line-height:14px;color:#000;letter-spacing:0px;">USER32.dll</div>
<div style="position:absolute;left:354px;top:229px;width:90px;height:25px;background:#d8d8d8;border-right:1px solid #c8c8c8;border-bottom:1px solid #c8c8c8;"></div>
<div style="position:absolute;left:356px;top:235px;white-space:pre;font-size:12px;line-height:14px;color:#000;letter-spacing:-0.75px;">37</div>
<div style="position:absolute;left:444px;top:229px;width:90px;height:25px;background:#fff;border-right:1px solid #c8c8c8;border-bottom:1px solid #c8c8c8;"></div>
<div style="position:absolute;left:446px;top:235px;white-space:pre;font-size:12px;line-height:14px;color:#000;letter-spacing:-0.75px;">00079B64</div>
<div style="position:absolute;left:534px;top:229px;width:100px;height:25px;background:#fff;border-right:1px solid #c8c8c8;border-bottom:1px solid #c8c8c8;"></div>
<div style="position:absolute;left:536px;top:235px;white-space:pre;font-size:12px;line-height:14px;color:#000;letter-spacing:-0.75px;">00000000</div>
<div style="position:absolute;left:634px;top:229px;width:100px;height:25px;background:#fff;border-right:1px solid #c8c8c8;border-bottom:1px solid #c8c8c8;"></div>
<div style="position:absolute;left:636px;top:235px;white-space:pre;font-size:12px;line-height:14px;color:#000;letter-spacing:-0.75px;">00000000</div>
<div style="position:absolute;left:734px;top:229px;width:90px;height:25px;background:#fff;border-right:1px solid #c8c8c8;border-bottom:1px solid #c8c8c8;"></div>
<div style="position:absolute;left:736px;top:235px;white-space:pre;font-size:12px;line-height:14px;color:#000;letter-spacing:-0.75px;">0007A46E</div>
<div style="position:absolute;left:824px;top:229px;width:90px;height:25px;background:#fff;border-right:1px solid #c8c8c8;border-bottom:1px solid #c8c8c8;"></div>
<div style="position:absolute;left:826px;top:235px;white-space:pre;font-size:12px;line-height:14px;color:#000;letter-spacing:-0.75px;">0006F25C</div>
<div style="position:absolute;left:234px;top:254px;width:120px;height:25px;background:#fff;border-right:1px solid #c8c8c8;border-bottom:1px solid #c8c8c8;"></div>
<div style="position:absolute;left:237px;top:260px;white-space:pre;font-size:12px;line-height:14px;color:#000;letter-spacing:0px;">GDI32.dll</div>
<div style="position:absolute;left:354px;top:254px;width:90px;height:25px;background:#d8d8d8;border-right:1px solid #c8c8c8;border-bottom:1px solid #c8c8c8;"></div>
<div style="position:absolute;left:356px;top:260px;white-space:pre;font-size:12px;line-height:14px;color:#000;letter-spacing:-0.75px;">11</div>
<div style="position:absolute;left:444px;top:254px;width:90px;height:25px;background:#fff;border-right:1px solid #c8c8c8;border-bottom:1px solid #c8c8c8;"></div>
<div style="position:absolute;left:446px;top:260px;white-space:pre;font-size:12px;line-height:14px;color:#000;letter-spacing:-0.75px;">00079924</div>
<div style="position:absolute;left:534px;top:254px;width:100px;height:25px;background:#fff;border-right:1px solid #c8c8c8;border-bottom:1px solid #c8c8c8;"></div>
<div style="position:absolute;left:536px;top:260px;white-space:pre;font-size:12px;line-height:14px;color:#000;letter-spacing:-0.75px;">00000000</div>
<div style="position:absolute;left:634px;top:254px;width:100px;height:25px;background:#fff;border-right:1px solid #c8c8c8;border-bottom:1px solid #c8c8c8;"></div>
<div style="position:absolute;left:636px;top:260px;white-space:pre;font-size:12px;line-height:14px;color:#000;letter-spacing:-0.75px;">00000000</div>
<div style="position:absolute;left:734px;top:254px;width:90px;height:25px;background:#fff;border-right:1px solid #c8c8c8;border-bottom:1px solid #c8c8c8;"></div>
<div style="position:absolute;left:736px;top:260px;white-space:pre;font-size:12px;line-height:14px;color:#000;letter-spacing:-0.75px;">0007A538</div>
<div style="position:absolute;left:824px;top:254px;width:90px;height:25px;background:#fff;border-right:1px solid #c8c8c8;border-bottom:1px solid #c8c8c8;"></div>
<div style="position:absolute;left:826px;top:260px;white-space:pre;font-size:12px;line-height:14px;color:#000;letter-spacing:-0.75px;">0006F01C</div>
<div style="position:absolute;left:234px;top:279px;width:120px;height:25px;background:#fff;border-right:1px solid #c8c8c8;border-bottom:1px solid #c8c8c8;"></div>
<div style="position:absolute;left:237px;top:285px;white-space:pre;font-size:12px;line-height:14px;color:#000;letter-spacing:0px;">xrNetServer.dll</div>
<div style="position:absolute;left:354px;top:279px;width:90px;height:25px;background:#d8d8d8;border-right:1px solid #c8c8c8;border-bottom:1px solid #c8c8c8;"></div>
<div style="position:absolute;left:356px;top:285px;white-space:pre;font-size:12px;line-height:14px;color:#000;letter-spacing:-0.75px;">2</div>
<div style="position:absolute;left:444px;top:279px;width:90px;height:25px;background:#fff;border-right:1px solid #c8c8c8;border-bottom:1px solid #c8c8c8;"></div>
<div style="position:absolute;left:446px;top:285px;white-space:pre;font-size:12px;line-height:14px;color:#000;letter-spacing:-0.75px;">00079F34</div>
<div style="position:absolute;left:534px;top:279px;width:100px;height:25px;background:#fff;border-right:1px solid #c8c8c8;border-bottom:1px solid #c8c8c8;"></div>
<div style="position:absolute;left:536px;top:285px;white-space:pre;font-size:12px;line-height:14px;color:#000;letter-spacing:-0.75px;">00000000</div>
<div style="position:absolute;left:634px;top:279px;width:100px;height:25px;background:#fff;border-right:1px solid #c8c8c8;border-bottom:1px solid #c8c8c8;"></div>
<div style="position:absolute;left:636px;top:285px;white-space:pre;font-size:12px;line-height:14px;color:#000;letter-spacing:-0.75px;">00000000</div>
<div style="position:absolute;left:734px;top:279px;width:90px;height:25px;background:#fff;border-right:1px solid #c8c8c8;border-bottom:1px solid #c8c8c8;"></div>
<div style="position:absolute;left:736px;top:285px;white-space:pre;font-size:12px;line-height:14px;color:#000;letter-spacing:-0.75px;">0007A5F8</div>
<div style="position:absolute;left:824px;top:279px;width:90px;height:25px;background:#fff;border-right:1px solid #c8c8c8;border-bottom:1px solid #c8c8c8;"></div>
<div style="position:absolute;left:826px;top:285px;white-space:pre;font-size:12px;line-height:14px;color:#000;letter-spacing:-0.75px;">0006F62C</div>
<div style="position:absolute;left:234px;top:304px;width:120px;height:25px;background:#fff;border-right:1px solid #c8c8c8;border-bottom:1px solid #c8c8c8;"></div>
<div style="position:absolute;left:237px;top:310px;white-space:pre;font-size:12px;line-height:14px;color:#000;letter-spacing:0px;">xrSound.dll</div>
<div style="position:absolute;left:354px;top:304px;width:90px;height:25px;background:#d8d8d8;border-right:1px solid #c8c8c8;border-bottom:1px solid #c8c8c8;"></div>
<div style="position:absolute;left:356px;top:310px;white-space:pre;font-size:12px;line-height:14px;color:#000;letter-spacing:-0.75px;">11</div>
<div style="position:absolute;left:444px;top:304px;width:90px;height:25px;background:#fff;border-right:1px solid #c8c8c8;border-bottom:1px solid #c8c8c8;"></div>
<div style="position:absolute;left:446px;top:310px;white-space:pre;font-size:12px;line-height:14px;color:#000;letter-spacing:-0.75px;">00079F40</div>
<div style="position:absolute;left:534px;top:304px;width:100px;height:25px;background:#fff;border-right:1px solid #c8c8c8;border-bottom:1px solid #c8c8c8;"></div>
<div style="position:absolute;left:536px;top:310px;white-space:pre;font-size:12px;line-height:14px;color:#000;letter-spacing:-0.75px;">00000000</div>
<div style="position:absolute;left:634px;top:304px;width:100px;height:25px;background:#fff;border-right:1px solid #c8c8c8;border-bottom:1px solid #c8c8c8;"></div>
<div style="position:absolute;left:636px;top:310px;white-space:pre;font-size:12px;line-height:14px;color:#000;letter-spacing:-0.75px;">00000000</div>
<div style="position:absolute;left:734px;top:304px;width:90px;height:25px;background:#fff;border-right:1px solid #c8c8c8;border-bottom:1px solid #c8c8c8;"></div>
<div style="position:absolute;left:736px;top:310px;white-space:pre;font-size:12px;line-height:14px;color:#000;letter-spacing:-0.75px;">0007A768</div>
<div style="position:absolute;left:824px;top:304px;width:90px;height:25px;background:#fff;border-right:1px solid #c8c8c8;border-bottom:1px solid #c8c8c8;"></div>
<div style="position:absolute;left:826px;top:310px;white-space:pre;font-size:12px;line-height:14px;color:#000;letter-spacing:-0.75px;">0006F638</div>
<div style="position:absolute;left:234px;top:204px;width:119px;height:24px;border:1px solid #000;box-shadow:inset 0 0 0 1px rgba(0,0,0,0.45);"></div>
<div style="position:absolute;left:232px;top:329px;width:704px;height:6px;background:#f0f0f0;border-top:1px solid #fff;"></div>
<div style="position:absolute;left:233px;top:335px;width:703px;height:2px;background:#6d6d6d;"></div>
<div style="position:absolute;left:230px;top:337px;width:695px;height:255px;background:#ababab;"></div>
<div style="position:absolute;left:230px;top:329px;width:4px;height:263px;background:#a0a0a0;"></div>
<div style="position:absolute;left:234px;top:337px;width:90px;height:25px;background:#f0f0f0;border-left:1px solid #fff;border-top:1px solid #fff;border-right:1px solid #6d6d6d;border-bottom:1px solid #6d6d6d;"></div>
<div style="position:absolute;left:238px;top:343px;white-space:pre;font-size:12px;line-height:14px;color:#000;letter-spacing:0px;">OFTs</div>
<div style="position:absolute;left:324px;top:337px;width:90px;height:25px;background:#f0f0f0;border-left:1px solid #fff;border-top:1px solid #fff;border-right:1px solid #6d6d6d;border-bottom:1px solid #6d6d6d;"></div>
<div style="position:absolute;left:328px;top:343px;white-space:pre;font-size:12px;line-height:14px;color:#000;letter-spacing:0px;">FTs (IAT)</div>
<div style="position:absolute;left:414px;top:337px;width:90px;height:25px;background:#f0f0f0;border-left:1px solid #fff;border-top:1px solid #fff;border-right:1px solid #6d6d6d;border-bottom:1px solid #6d6d6d;"></div>
<div style="position:absolute;left:418px;top:343px;white-space:pre;font-size:12px;line-height:14px;color:#000;letter-spacing:0px;">Hint</div>
<div style="position:absolute;left:505px;top:338px;width:199px;height:25px;background:#f0f0f0;border-left:1px solid #fff;border-top:1px solid #fff;border-right:1px solid #e4e4e4;border-bottom:1px solid #6d6d6d;"></div>
<div style="position:absolute;left:503px;top:336px;width:2px;height:76px;background:#6d6d6d;"></div>
<div style="position:absolute;left:508px;top:344px;white-space:pre;font-size:12px;line-height:14px;color:#000;letter-spacing:0px;">Name</div>
<div style="position:absolute;left:234px;top:362px;width:90px;height:25px;background:#f0f0f0;border-left:1px solid #fff;border-top:1px solid #fff;border-right:1px solid #6d6d6d;border-bottom:1px solid #6d6d6d;"></div>
<div style="position:absolute;left:238px;top:368px;white-space:pre;font-size:12px;line-height:14px;color:#000;letter-spacing:-0.75px;">000789DC</div>
<div style="position:absolute;left:324px;top:362px;width:90px;height:25px;background:#f0f0f0;border-left:1px solid #fff;border-top:1px solid #fff;border-right:1px solid #6d6d6d;border-bottom:1px solid #6d6d6d;"></div>
<div style="position:absolute;left:328px;top:368px;white-space:pre;font-size:12px;line-height:14px;color:#000;letter-spacing:-0.75px;">0006E0D4</div>
<div style="position:absolute;left:414px;top:362px;width:90px;height:25px;background:#f0f0f0;border-left:1px solid #fff;border-top:1px solid #fff;border-right:1px solid #6d6d6d;border-bottom:1px solid #6d6d6d;"></div>
<div style="position:absolute;left:418px;top:368px;white-space:pre;font-size:12px;line-height:14px;color:#000;letter-spacing:-0.75px;">00079042</div>
<div style="position:absolute;left:505px;top:363px;width:199px;height:25px;background:#f0f0f0;border-left:1px solid #fff;border-top:1px solid #fff;border-right:1px solid #e4e4e4;border-bottom:1px solid #6d6d6d;"></div>
<div style="position:absolute;left:508px;top:369px;white-space:pre;font-size:12px;line-height:14px;color:#000;letter-spacing:-0.75px;">00079044</div>
<div style="position:absolute;left:234px;top:387px;width:90px;height:25px;background:#f0f0f0;border-left:1px solid #fff;border-top:1px solid #fff;border-right:1px solid #6d6d6d;border-bottom:1px solid #6d6d6d;"></div>
<div style="position:absolute;left:238px;top:393px;white-space:pre;font-size:12px;line-height:14px;color:#000;letter-spacing:0px;">Dword</div>
<div style="position:absolute;left:324px;top:387px;width:90px;height:25px;background:#f0f0f0;border-left:1px solid #fff;border-top:1px solid #fff;border-right:1px solid #6d6d6d;border-bottom:1px solid #6d6d6d;"></div>
<div style="position:absolute;left:328px;top:393px;white-space:pre;font-size:12px;line-height:14px;color:#000;letter-spacing:0px;">Dword</div>
<div style="position:absolute;left:414px;top:387px;width:90px;height:25px;background:#f0f0f0;border-left:1px solid #fff;border-top:1px solid #fff;border-right:1px solid #6d6d6d;border-bottom:1px solid #6d6d6d;"></div>
<div style="position:absolute;left:418px;top:393px;white-space:pre;font-size:12px;line-height:14px;color:#000;letter-spacing:0px;">Word</div>
<div style="position:absolute;left:505px;top:388px;width:199px;height:24px;background:#f0f0f0;border-left:1px solid #fff;border-top:1px solid #fff;border-right:1px solid #e4e4e4;border-bottom:1px solid #dcdcdc;"></div>
<div style="position:absolute;left:508px;top:394px;white-space:pre;font-size:12px;line-height:14px;color:#000;letter-spacing:0px;">szAnsi</div>
<div style="position:absolute;left:234px;top:412px;width:90px;height:25px;background:#fff;border-right:1px solid #c8c8c8;border-bottom:1px solid #c8c8c8;"></div>
<div style="position:absolute;left:236px;top:418px;white-space:pre;font-size:12px;line-height:14px;color:#000;letter-spacing:-0.75px;">0007A05A</div>
<div style="position:absolute;left:324px;top:412px;width:90px;height:25px;background:#fff;border-right:1px solid #c8c8c8;border-bottom:1px solid #c8c8c8;"></div>
<div style="position:absolute;left:326px;top:418px;white-space:pre;font-size:12px;line-height:14px;color:#000;letter-spacing:-0.75px;">7C80998B</div>
<div style="position:absolute;left:414px;top:412px;width:90px;height:25px;background:#fff;border-right:1px solid #c8c8c8;border-bottom:1px solid #c8c8c8;"></div>
<div style="position:absolute;left:416px;top:418px;white-space:pre;font-size:12px;line-height:14px;color:#000;letter-spacing:-0.75px;">0145</div>
<div style="position:absolute;left:504px;top:412px;width:200px;height:25px;background:#fff;border-right:1px solid #c8c8c8;border-bottom:1px solid #c8c8c8;"></div>
<div style="position:absolute;left:507px;top:418px;white-space:pre;font-size:12px;line-height:14px;color:#000;letter-spacing:0px;">GetCurrentThread</div>
<div style="position:absolute;left:234px;top:437px;width:90px;height:25px;background:#b0c5e7;border-right:1px solid #c8c8c8;border-bottom:1px solid #c8c8c8;"></div>
<div style="position:absolute;left:236px;top:443px;white-space:pre;font-size:12px;line-height:14px;color:#000;letter-spacing:-0.75px;">0007A042</div>
<div style="position:absolute;left:324px;top:437px;width:90px;height:25px;background:#b0c5e7;border-right:1px solid #c8c8c8;border-bottom:1px solid #c8c8c8;"></div>
<div style="position:absolute;left:326px;top:443px;white-space:pre;font-size:12px;line-height:14px;color:#000;letter-spacing:-0.75px;">7C82FA82</div>
<div style="position:absolute;left:414px;top:437px;width:90px;height:25px;background:#b0c5e7;border-right:1px solid #c8c8c8;border-bottom:1px solid #c8c8c8;"></div>
<div style="position:absolute;left:416px;top:443px;white-space:pre;font-size:12px;line-height:14px;color:#000;letter-spacing:-0.75px;">033F</div>
<div style="position:absolute;left:504px;top:437px;width:200px;height:25px;background:#b0c5e7;border-right:1px solid #c8c8c8;border-bottom:1px solid #c8c8c8;"></div>
<div style="position:absolute;left:507px;top:443px;white-space:pre;font-size:12px;line-height:14px;color:#000;letter-spacing:0px;">SetThreadAffinityMask</div>
<div style="position:absolute;left:234px;top:462px;width:90px;height:25px;background:#fff;border-right:1px solid #c8c8c8;border-bottom:1px solid #c8c8c8;"></div>
<div style="position:absolute;left:236px;top:468px;white-space:pre;font-size:12px;line-height:14px;color:#000;letter-spacing:-0.75px;">0007A032</div>
<div style="position:absolute;left:324px;top:462px;width:90px;height:25px;background:#fff;border-right:1px solid #c8c8c8;border-bottom:1px solid #c8c8c8;"></div>
<div style="position:absolute;left:326px;top:468px;white-space:pre;font-size:12px;line-height:14px;color:#000;letter-spacing:-0.75px;">7C80E9DF</div>
<div style="position:absolute;left:414px;top:462px;width:90px;height:25px;background:#fff;border-right:1px solid #c8c8c8;border-bottom:1px solid #c8c8c8;"></div>
<div style="position:absolute;left:416px;top:468px;white-space:pre;font-size:12px;line-height:14px;color:#000;letter-spacing:-0.75px;">0060</div>
<div style="position:absolute;left:504px;top:462px;width:200px;height:25px;background:#fff;border-right:1px solid #c8c8c8;border-bottom:1px solid #c8c8c8;"></div>
<div style="position:absolute;left:507px;top:468px;white-space:pre;font-size:12px;line-height:14px;color:#000;letter-spacing:0px;">CreateMutexA</div>
<div style="position:absolute;left:234px;top:487px;width:90px;height:25px;background:#fff;border-right:1px solid #c8c8c8;border-bottom:1px solid #c8c8c8;"></div>
<div style="position:absolute;left:236px;top:493px;white-space:pre;font-size:12px;line-height:14px;color:#000;letter-spacing:-0.75px;">0007A024</div>
<div style="position:absolute;left:324px;top:487px;width:90px;height:25px;background:#fff;border-right:1px solid #c8c8c8;border-bottom:1px solid #c8c8c8;"></div>
<div style="position:absolute;left:326px;top:493px;white-space:pre;font-size:12px;line-height:14px;color:#000;letter-spacing:-0.75px;">7C80EABB</div>
<div style="position:absolute;left:414px;top:487px;width:90px;height:25px;background:#fff;border-right:1px solid #c8c8c8;border-bottom:1px solid #c8c8c8;"></div>
<div style="position:absolute;left:416px;top:493px;white-space:pre;font-size:12px;line-height:14px;color:#000;letter-spacing:-0.75px;">0284</div>
<div style="position:absolute;left:504px;top:487px;width:200px;height:25px;background:#fff;border-right:1px solid #c8c8c8;border-bottom:1px solid #c8c8c8;"></div>
<div style="position:absolute;left:507px;top:493px;white-space:pre;font-size:12px;line-height:14px;color:#000;letter-spacing:0px;">OpenMutexA</div>
<div style="position:absolute;left:234px;top:512px;width:90px;height:25px;background:#fff;border-right:1px solid #c8c8c8;border-bottom:1px solid #c8c8c8;"></div>
<div style="position:absolute;left:236px;top:518px;white-space:pre;font-size:12px;line-height:14px;color:#000;letter-spacing:-0.75px;">0007A012</div>
<div style="position:absolute;left:324px;top:512px;width:90px;height:25px;background:#fff;border-right:1px solid #c8c8c8;border-bottom:1px solid #c8c8c8;"></div>
<div style="position:absolute;left:326px;top:518px;white-space:pre;font-size:12px;line-height:14px;color:#000;letter-spacing:-0.75px;">7C80AC61</div>
<div style="position:absolute;left:414px;top:512px;width:90px;height:25px;background:#fff;border-right:1px solid #c8c8c8;border-bottom:1px solid #c8c8c8;"></div>
<div style="position:absolute;left:416px;top:518px;white-space:pre;font-size:12px;line-height:14px;color:#000;letter-spacing:-0.75px;">01A3</div>
<div style="position:absolute;left:504px;top:512px;width:200px;height:25px;background:#fff;border-right:1px solid #c8c8c8;border-bottom:1px solid #c8c8c8;"></div>
<div style="position:absolute;left:507px;top:518px;white-space:pre;font-size:12px;line-height:14px;color:#000;letter-spacing:0px;">GetProcessHeap</div>
<div style="position:absolute;left:234px;top:537px;width:90px;height:25px;background:#fff;border-right:1px solid #c8c8c8;border-bottom:1px solid #c8c8c8;"></div>
<div style="position:absolute;left:236px;top:543px;white-space:pre;font-size:12px;line-height:14px;color:#000;letter-spacing:-0.75px;">0007A000</div>
<div style="position:absolute;left:324px;top:537px;width:90px;height:25px;background:#fff;border-right:1px solid #c8c8c8;border-bottom:1px solid #c8c8c8;"></div>
<div style="position:absolute;left:326px;top:543px;white-space:pre;font-size:12px;line-height:14px;color:#000;letter-spacing:-0.75px;">0052DB53</div>
<div style="position:absolute;left:414px;top:537px;width:90px;height:25px;background:#fff;border-right:1px solid #c8c8c8;border-bottom:1px solid #c8c8c8;"></div>
<div style="position:absolute;left:416px;top:543px;white-space:pre;font-size:12px;line-height:14px;color:#000;letter-spacing:-0.75px;">01A0</div>
<div style="position:absolute;left:504px;top:537px;width:200px;height:25px;background:#fff;border-right:1px solid #c8c8c8;border-bottom:1px solid #c8c8c8;"></div>
<div style="position:absolute;left:507px;top:543px;white-space:pre;font-size:12px;line-height:14px;color:#000;letter-spacing:0px;">GetProcAddress</div>
<div style="position:absolute;left:234px;top:562px;width:90px;height:25px;background:#fff;border-right:1px solid #c8c8c8;border-bottom:1px solid #c8c8c8;"></div>
<div style="position:absolute;left:236px;top:568px;white-space:pre;font-size:12px;line-height:14px;color:#000;letter-spacing:-0.75px;">0007A1B2</div>
<div style="position:absolute;left:324px;top:562px;width:90px;height:25px;background:#fff;border-right:1px solid #c8c8c8;border-bottom:1px solid #c8c8c8;"></div>
<div style="position:absolute;left:326px;top:568px;white-space:pre;font-size:12px;line-height:14px;color:#000;letter-spacing:-0.75px;">7C812822</div>
<div style="position:absolute;left:414px;top:562px;width:90px;height:25px;background:#fff;border-right:1px solid #c8c8c8;border-bottom:1px solid #c8c8c8;"></div>
<div style="position:absolute;left:416px;top:568px;white-space:pre;font-size:12px;line-height:14px;color:#000;letter-spacing:-0.75px;">0319</div>
<div style="position:absolute;left:504px;top:562px;width:200px;height:25px;background:#fff;border-right:1px solid #c8c8c8;border-bottom:1px solid #c8c8c8;"></div>
<div style="position:absolute;left:507px;top:568px;white-space:pre;font-size:12px;line-height:14px;color:#000;letter-spacing:0px;">SetFileAttributesA</div>
<div style="position:absolute;left:504px;top:437px;width:199px;height:24px;border:1px solid #000;box-shadow:inset 0 0 0 1px rgba(0,0,0,0.45);"></div>
<div style="position:absolute;left:230px;top:592px;width:706px;height:77px;background:#f0f0f0;border-top:3px solid #fafafa;"></div>
<div style="position:absolute;left:230px;top:598px;width:706px;height:1px;background:#acb0b8;"></div>
<div style="position:absolute;left:230px;top:599px;width:706px;height:1px;background:#fff;"></div>
<div style="position:absolute;left:230px;top:666px;width:706px;height:1px;background:#fff;"></div>
<div style="position:absolute;left:230px;top:667px;width:706px;height:1px;background:#e4e8ee;"></div>
<div style="position:absolute;left:230px;top:668px;width:706px;height:1px;background:#fff;"></div>
<div style="position:absolute;left:925px;top:79px;width:11px;height:250px;background:linear-gradient(90deg,#e4e4e4,#f0f0f0 60%);border-left:1px solid #fff;"></div>
<svg style="position:absolute;left:931px;top:86px" width="8" height="5" viewBox="0 0 8 5"><defs><linearGradient id="ua79" x1="0" y1="0" x2="1" y2="0"><stop offset="0" stop-color="#202020"/><stop offset="1" stop-color="#a0a0a0"/></linearGradient></defs><path d="M0 4.5 L3.5 0.5 L7 4.5Z" fill="url(#ua79)"/></svg>
<svg style="position:absolute;left:931px;top:320px" width="8" height="5" viewBox="0 0 8 5"><defs><linearGradient id="da79" x1="0" y1="0" x2="1" y2="0"><stop offset="0" stop-color="#202020"/><stop offset="1" stop-color="#a0a0a0"/></linearGradient></defs><path d="M0 0.5 L3.5 4.5 L7 0.5Z" fill="url(#da79)"/></svg>
<div style="position:absolute;left:926px;top:97px;width:20px;height:106px;background:linear-gradient(90deg,#fdfdfd,#e6e6e6);border:1px solid #9c9c9c;border-radius:2px;box-shadow:inset 1px 1px 0 #fff;"></div>
<div style="position:absolute;left:930px;top:147px;width:10px;height:1px;background:#4a4a4a;"></div>
<div style="position:absolute;left:930px;top:148px;width:10px;height:1px;background:#fff;"></div>
<div style="position:absolute;left:930px;top:150px;width:10px;height:1px;background:#4a4a4a;"></div>
<div style="position:absolute;left:930px;top:151px;width:10px;height:1px;background:#fff;"></div>
<div style="position:absolute;left:930px;top:153px;width:10px;height:1px;background:#4a4a4a;"></div>
<div style="position:absolute;left:930px;top:154px;width:10px;height:1px;background:#fff;"></div>
<div style="position:absolute;left:925px;top:337px;width:11px;height:255px;background:linear-gradient(90deg,#e4e4e4,#f0f0f0 60%);border-left:1px solid #fff;"></div>
<svg style="position:absolute;left:931px;top:344px" width="8" height="5" viewBox="0 0 8 5"><defs><linearGradient id="ua337" x1="0" y1="0" x2="1" y2="0"><stop offset="0" stop-color="#202020"/><stop offset="1" stop-color="#a0a0a0"/></linearGradient></defs><path d="M0 4.5 L3.5 0.5 L7 4.5Z" fill="url(#ua337)"/></svg>
<svg style="position:absolute;left:931px;top:583px" width="8" height="5" viewBox="0 0 8 5"><defs><linearGradient id="da337" x1="0" y1="0" x2="1" y2="0"><stop offset="0" stop-color="#202020"/><stop offset="1" stop-color="#a0a0a0"/></linearGradient></defs><path d="M0 0.5 L3.5 4.5 L7 0.5Z" fill="url(#da337)"/></svg>
<div style="position:absolute;left:926px;top:524px;width:20px;height:50px;background:linear-gradient(90deg,#fdfdfd,#e6e6e6);border:1px solid #9c9c9c;border-radius:2px;box-shadow:inset 1px 1px 0 #fff;"></div>
<div style="position:absolute;left:930px;top:546px;width:10px;height:1px;background:#4a4a4a;"></div>
<div style="position:absolute;left:930px;top:547px;width:10px;height:1px;background:#fff;"></div>
<div style="position:absolute;left:930px;top:549px;width:10px;height:1px;background:#4a4a4a;"></div>
<div style="position:absolute;left:930px;top:550px;width:10px;height:1px;background:#fff;"></div>
<div style="position:absolute;left:930px;top:552px;width:10px;height:1px;background:#4a4a4a;"></div>
<div style="position:absolute;left:930px;top:553px;width:10px;height:1px;background:#fff;"></div>
<div style="position:absolute;left:925px;top:599px;width:11px;height:68px;background:linear-gradient(90deg,#e4e4e4,#f0f0f0 60%);border-left:1px solid #fff;"></div>
<svg style="position:absolute;left:931px;top:606px" width="8" height="5" viewBox="0 0 8 5"><defs><linearGradient id="ua599" x1="0" y1="0" x2="1" y2="0"><stop offset="0" stop-color="#202020"/><stop offset="1" stop-color="#a0a0a0"/></linearGradient></defs><path d="M0 4.5 L3.5 0.5 L7 4.5Z" fill="url(#ua599)"/></svg>
<svg style="position:absolute;left:931px;top:658px" width="8" height="5" viewBox="0 0 8 5"><defs><linearGradient id="da599" x1="0" y1="0" x2="1" y2="0"><stop offset="0" stop-color="#202020"/><stop offset="1" stop-color="#a0a0a0"/></linearGradient></defs><path d="M0 0.5 L3.5 4.5 L7 0.5Z" fill="url(#da599)"/></svg>
</body></html>
